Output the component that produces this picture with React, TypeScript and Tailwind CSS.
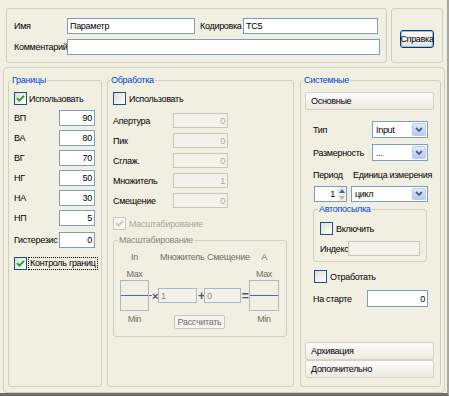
import React from "react";

const font = "font-['Liberation_Sans_Narrow','Liberation_Sans',Arial,sans-serif]";

function CheckBox({ checked = false, disabled = false }: { checked?: boolean; disabled?: boolean }) {
  return (
    <span
      className={`flex h-[13px] w-[13px] shrink-0 items-center justify-center border ${
        disabled ? "border-[#CAC8BB] bg-[#F7F6F1]" : "border-[#1C5180] bg-gradient-to-br from-[#DCDCD7] to-white"
      }`}
    >
      {checked && (
        <svg width="9" height="9" viewBox="0 0 9 9">
          <path d="M1 4.2 L3.4 6.6 L8 1.8" fill="none" stroke={disabled ? "#CAC8BB" : "#21A121"} strokeWidth="1.8" />
        </svg>
      )}
    </span>
  );
}

function Combo({ value, className }: { value: string; className: string }) {
  return (
    <div className={`flex items-stretch border border-[#7F9DB9] bg-white ${className}`}>
      <span className="flex flex-1 items-center pl-[3px]">{value}</span>
      <span className="m-[1px] flex w-[14px] items-center justify-center rounded-[2px] border border-[#B9CBF3] bg-gradient-to-b from-[#E3EBFD] to-[#B4C9F6]">
        <svg width="8" height="6" viewBox="0 0 8 6">
          <path d="M1 1 L4 4 L7 1" fill="none" stroke="#4D6185" strokeWidth="1.8" />
        </svg>
      </span>
    </div>
  );
}

function BarButton({ label, className = "" }: { label: string; className?: string }) {
  return (
    <div
      className={`flex h-[18px] items-center rounded-[2px] border border-[#D5D3C7] bg-gradient-to-b from-[#FCFCFA] to-[#ECEAE0] pl-[5px] ${className}`}
    >
      {label}
    </div>
  );
}

const limits = [
  ["ВП", "90"],
  ["ВА", "80"],
  ["ВГ", "70"],
  ["НГ", "50"],
  ["НА", "30"],
  ["НП", "5"],
];

const processing = [
  ["Апертура", "0"],
  ["Пик", "0"],
  ["Сглаж.", "0"],
  ["Множитель", "1"],
  ["Смещение", "0"],
];

export default function App() {
  return (
    <div
      className={`${font} h-[396px] w-[449px] overflow-hidden whitespace-nowrap border-r-2 border-b-[3px] border-r-[#A8A69C] border-b-[#6E6D68] bg-[#F1EFE2] text-[9px] leading-[12px] tracking-[-0.3px] text-black`}
    >
      {/* top: name / code / comment */}
      <div className="flex gap-[4px] pt-[8px] pl-[6px]">
        <div className="h-[55px] w-[381px] rounded-[3px] border border-[#D0D0BF] pt-[9px] pl-[7px]">
          <div className="flex h-[16px] items-center">
            <span className="w-[53px]">Имя</span>
            <div className="flex h-full w-[128px] items-center border border-[#7F9DB9] bg-white pl-[2px]">Параметр</div>
            <span className="ml-[5px] w-[43px]">Кодировка</span>
            <div className="flex h-full w-[135px] items-center border border-[#7F9DB9] bg-white pl-[2px]">ТС5</div>
          </div>
          <div className="mt-[5px] flex h-[16px] items-center">
            <span className="w-[53px]">Комментарий</span>
            <div className="h-full w-[313px] border border-[#7F9DB9] bg-white" />
          </div>
        </div>
        <div className="flex h-[55px] w-[52px] justify-center rounded-[3px] border border-[#D0D0BF] pt-[21px]">
          <div className="flex h-[18px] w-[34px] items-center justify-center rounded-[3px] border border-[#003C74] bg-gradient-to-b from-white to-[#E3E2DA] shadow-[inset_0_0_0_1px_#9DBCEC]">
            Справка
          </div>
        </div>
      </div>

      {/* lower frame */}
      <div className="mt-[4px] ml-[3px] flex h-[326px] w-[442px] gap-[5px] rounded-[4px] border border-[#D0D0BF] pt-[6px] pl-[4px]">
        {/* Границы */}
        <fieldset className="h-[313px] w-[94px] rounded-[3px] border border-[#D0D0BF] pl-[5px]">
          <legend className="-ml-[3px] px-[1px] text-[#0046D5]">Границы</legend>
          <div className="mt-[6px] flex h-[13px] items-center gap-[2px]">
            <CheckBox checked />
            <span>Использовать</span>
          </div>
          <div className="mt-[5px] flex flex-col gap-[4px]">
            {limits.map(([name, val]) => (
              <div key={name} className="flex h-[16px] items-center">
                <span className="w-[45px]">{name}</span>
                <div className="flex h-full w-[36px] items-center justify-end border border-[#7F9DB9] bg-white pr-[2px]">{val}</div>
              </div>
            ))}
          </div>
          <div className="mt-[6px] flex h-[16px] items-center">
            <span className="w-[45px]">Гистерезис</span>
            <div className="flex h-full w-[36px] items-center justify-end border border-[#7F9DB9] bg-white pr-[2px]">0</div>
          </div>
          <div className="mt-[9px] flex h-[13px] items-center gap-[1px]">
            <CheckBox checked />
            <span className="border border-dotted border-black px-[1px] leading-[11px]">Контроль границ</span>
          </div>
        </fieldset>

        {/* Обработка */}
        <fieldset className="h-[313px] w-[187px] rounded-[3px] border border-[#D0D0BF] pl-[5px]">
          <legend className="-ml-[3px] px-[1px] text-[#0046D5]">Обработка</legend>
          <div className="mt-[6px] flex h-[13px] items-center gap-[3px]">
            <CheckBox />
            <span>Использовать</span>
          </div>
          <div className="mt-[8px] flex flex-col gap-[5px]">
            {processing.map(([name, val]) => (
              <div key={name} className="flex h-[15px] items-center">
                <span className="w-[60px]">{name}</span>
                <div className="flex h-full w-[55px] items-center justify-end border border-[#C9C7BA] bg-[#F3F2EA] pr-[2px] text-[#ACA899]">
                  {val}
                </div>
              </div>
            ))}
          </div>
          <div className="mt-[9px] flex h-[13px] items-center gap-[3px]">
            <CheckBox checked disabled />
            <span className="text-[#ACA899]">Масштабирование</span>
          </div>

          <fieldset className="mt-[4px] h-[103px] w-[174px] rounded-[3px] border border-[#D0D0BF] pl-[6px]">
            <legend className="-ml-[2px] px-[1px] text-[#8A887E]">Масштабирование</legend>
            <div className="mt-[5px] grid grid-cols-[29px_9px_40px_6px_37px_8px_30px] grid-rows-[12px_17px_31px_16px] text-[#6F6E68]">
              <span className="text-center">In</span>
              <span />
              <span className="col-span-2 pl-[2px]">Множитель</span>
              <span className="col-span-2 pl-[3px]">Смещение</span>
              <span className="text-center">A</span>

              <span className="self-end text-center">Max</span>
              <span className="col-span-5" />
              <span className="self-end text-center">Max</span>

              <div className="flex items-center border border-[#A9B8C8]">
                <div className="h-px w-full bg-[#4E69A8]" />
              </div>
              <div className="flex items-center">
                <div className="h-px w-[3px] bg-[#4E69A8]" />
                <span className="text-[11px] font-bold text-[#555]">×</span>
              </div>
              <div className="flex h-[15px] w-[39px] items-center self-center border border-[#A9B8C8] bg-[#F3F2EA] pl-[2px] text-[#8A887E]">
                1
              </div>
              <span className="self-center text-center text-[12px] font-bold text-[#555]">+</span>
              <div className="flex h-[15px] items-center self-center border border-[#A9B8C8] bg-[#F3F2EA] pl-[2px] text-[#8A887E]">
                0
              </div>
              <span className="self-center text-center text-[12px] font-bold text-[#555]">=</span>
              <div className="flex items-center border border-[#A9B8C8]">
                <div className="h-px w-full bg-[#4E69A8]" />
              </div>

              <span className="pt-[2px] text-center">Min</span>
              <span />
              <div className="col-span-3 flex justify-center pt-[4px]">
                <div className="flex h-[14px] items-center rounded-[2px] border border-[#C9C7BA] bg-[#F5F4EE] px-[3px]">Рассчитать</div>
              </div>
              <span />
              <span className="pt-[2px] text-center">Min</span>
            </div>
          </fieldset>
        </fieldset>

        {/* Системные */}
        <fieldset className="ml-[1px] h-[313px] w-[141px] rounded-[3px] border border-[#D0D0BF] pr-[6px] pl-[4px]">
          <legend className="-ml-[2px] px-[1px] text-[#0046D5]">Системные</legend>
          <BarButton label="Основные" className="mt-[6px]" />

          <div className="mt-[11px] flex h-[17px] items-center pl-[8px]">
            <span className="w-[59px]">Тип</span>
            <Combo value="Input" className="h-full w-[56px]" />
          </div>
          <div className="mt-[6px] flex h-[17px] items-center pl-[8px]">
            <span className="w-[59px]">Размерность</span>
            <Combo value="..." className="h-full w-[56px]" />
          </div>
          <div className="mt-[8px] flex h-[12px] items-center pl-[8px]">
            <span className="w-[40px]">Период</span>
            <span>Единица измерения</span>
          </div>
          <div className="mt-[5px] flex h-[16px] items-stretch gap-[4px] pl-[9px]">
            <div className="flex w-[33px] border border-[#7F9DB9] bg-white">
              <span className="flex flex-1 items-center justify-end pr-[2px]">1</span>
              <div className="flex w-[9px] flex-col">
                <span className="flex flex-1 items-center justify-center bg-[#E3EBFD]">
                  <svg width="6" height="4" viewBox="0 0 6 4">
                    <path d="M0 4 L3 0 L6 4 Z" fill="#4D6185" />
                  </svg>
                </span>
                <span className="flex flex-1 items-center justify-center bg-[#F1F1EC]">
                  <svg width="6" height="4" viewBox="0 0 6 4">
                    <path d="M0 0 L6 0 L3 4 Z" fill="#B8B8B0" />
                  </svg>
                </span>
              </div>
            </div>
            <Combo value="цикл" className="w-[77px]" />
          </div>

          <fieldset className="mt-[1px] ml-[8px] h-[59px] w-[114px] rounded-[3px] border border-[#D0D0BF] pl-[6px]">
            <legend className="-ml-[2px] px-[1px] text-[#0046D5]">Автопосылка</legend>
            <div className="mt-[7px] flex h-[13px] items-center gap-[3px]">
              <CheckBox />
              <span>Включить</span>
            </div>
            <div className="mt-[6px] flex h-[15px] items-center">
              <span className="w-[28px]">Индекс</span>
              <div className="h-full w-[72px] border border-[#C9C7BA] bg-[#F3F2EA]" />
            </div>
          </fieldset>

          <div className="mt-[8px] ml-[9px] flex h-[13px] items-center gap-[3px]">
            <CheckBox />
            <span>Отработать</span>
          </div>
          <div className="mt-[7px] flex h-[17px] items-center pl-[8px]">
            <span className="w-[54px]">На старте</span>
            <div className="flex h-full w-[61px] items-center justify-end border border-[#7F9DB9] bg-white pr-[2px]">0</div>
          </div>

          <BarButton label="Архивация" className="mt-[35px] h-[16px]" />
          <BarButton label="Дополнительно" />
        </fieldset>
      </div>
    </div>
  );
}
